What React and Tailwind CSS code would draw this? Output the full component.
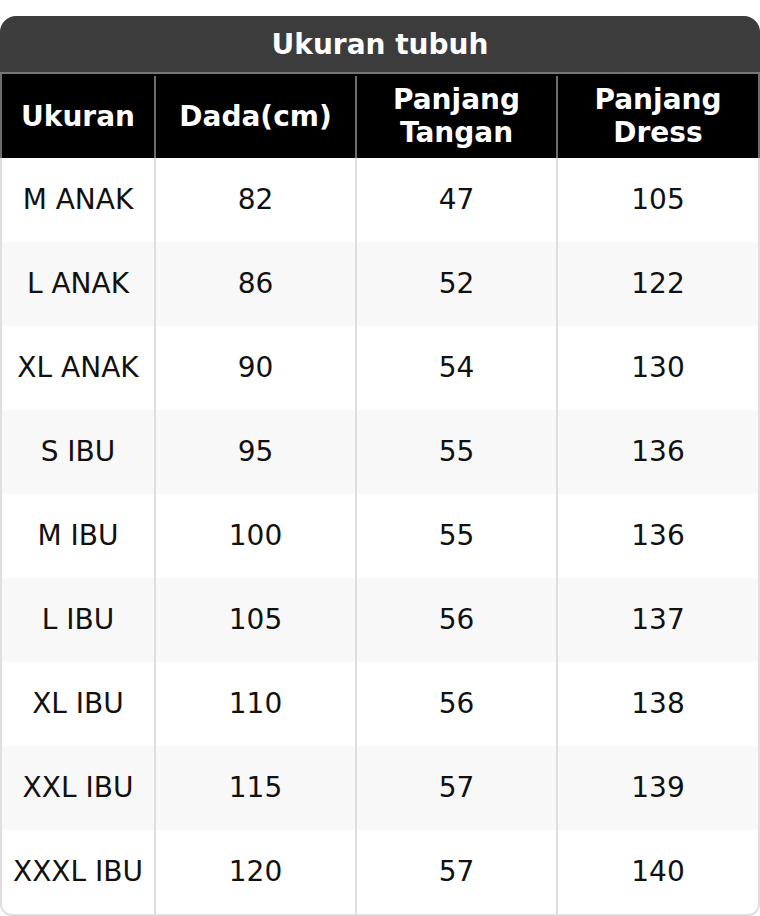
const rows = [
  ["M ANAK", "82", "47", "105"],
  ["L ANAK", "86", "52", "122"],
  ["XL ANAK", "90", "54", "130"],
  ["S IBU", "95", "55", "136"],
  ["M IBU", "100", "55", "136"],
  ["L IBU", "105", "56", "137"],
  ["XL IBU", "110", "56", "138"],
  ["XXL IBU", "115", "57", "139"],
  ["XXXL IBU", "120", "57", "140"],
];

export default function App() {
  return (
    <div className="min-h-screen bg-white pt-4 font-['DejaVu_Sans',sans-serif] text-[28px] leading-[1.164]">
      <div className="h-[58px] pt-[2px] rounded-t-2xl bg-[#3c3c3c] border-b-2 border-[#767676] flex items-center justify-center font-bold text-white">
        Ukuran tubuh
      </div>

      <div className="grid grid-cols-[152px_201px_201px_1fr] h-[84px] pt-[2px] bg-black border-x-2 border-[#6e6e6e] font-bold text-white text-center">
        <div className="flex items-center justify-center">Ukuran</div>
        <div className="flex items-center justify-center border-l-2 border-[#6e6e6e]">Dada(cm)</div>
        <div className="flex items-center justify-center border-l-2 border-[#6e6e6e]">
          Panjang
          <br />
          Tangan
        </div>
        <div className="flex items-center justify-center border-l-2 border-[#6e6e6e]">
          Panjang
          <br />
          Dress
        </div>
      </div>

      <div className="border-x-2 border-b-2 border-[#dedede] rounded-b-xl overflow-hidden text-[#111]">
        {rows.map((r, i) => (
          <div
            key={r[0]}
            className={
              "grid grid-cols-[152px_201px_201px_1fr] h-[84px] text-center " +
              (i % 2 === 1 ? "bg-[#f8f8f8]" : "bg-white")
            }
          >
            <div className="flex items-center justify-center">{r[0]}</div>
            <div className="flex items-center justify-center border-l-2 border-[#dedede]">{r[1]}</div>
            <div className="flex items-center justify-center border-l-2 border-[#dedede]">{r[2]}</div>
            <div className="flex items-center justify-center border-l-2 border-[#dedede]">{r[3]}</div>
          </div>
        ))}
      </div>
    </div>
  );
}
